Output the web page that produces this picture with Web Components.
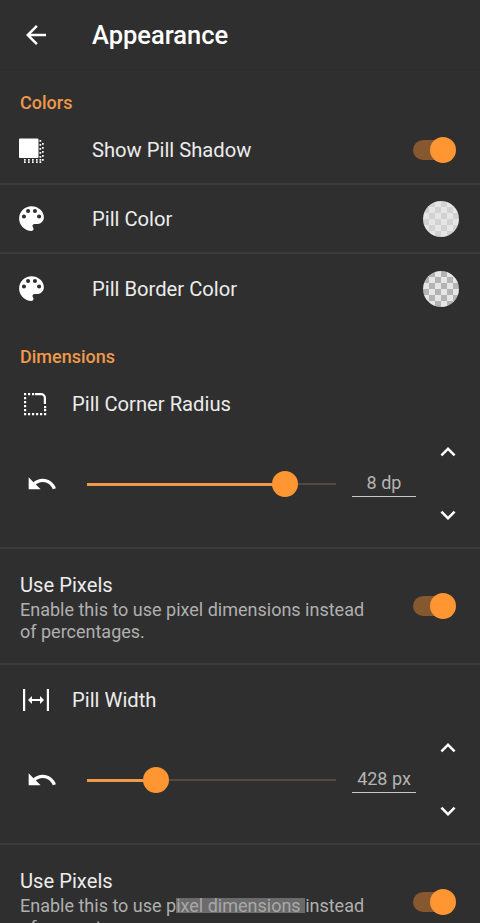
<!DOCTYPE html>
<html>
<head>
<meta charset="utf-8">
<title>Appearance</title>
<style>
  html, body { margin: 0; height: 923px; overflow: hidden; background: #2f2f2f; }
  body { font-family: Roboto, "Liberation Sans", sans-serif; color: #eee; }
</style>
</head>
<body>
<settings-page></settings-page>

<script>
const ICONS = {
  back: `<svg width="30" height="30" viewBox="0 0 24 24" fill="#fff"><path d="M20 11H7.83l5.59-5.59L12 4l-8 8 8 8 1.41-1.41L7.83 13H20z"/></svg>`,
  shadow: `<svg width="26" height="26" viewBox="0 0 26 26" fill="#fff"><rect x="1" y="1.500" width="19.500" height="19.500" rx="1"/><path d="M21.500 3h1.700v1.700h-1.700zM24 6h1.700v1.700H24zM21.500 7h1.700v1.700h-1.700zM24 10h1.700v1.700H24zM21.500 11h1.700v1.700h-1.700zM24 14h1.700v1.700H24zM21.500 15h1.700v1.700h-1.700zM24 18h1.700v1.700H24zM21.500 19h1.700v1.700h-1.700zM24 22h1.700v1.700H24zM21.500 22h1.700v1.700h-1.700zM6 22h1.700v1.700H6zM10 22h1.700v1.700h-1.700zM14 22h1.700v1.700H14zM18 22h1.700v1.700H18zM6 24.300h1.700V26H6zM10 24.300h1.700V26H10zM14 24.300h1.700V26H14zM18 24.300h1.700V26H18zM21.500 24.300h1.700V26h-1.700z"/></svg>`,
  palette: `<svg width="33" height="33" viewBox="0 0 24 24" fill="#fff"><path d="M12 3a9 9 0 0 0 0 18c.83 0 1.5-.67 1.5-1.5 0-.39-.15-.74-.39-1.01-.23-.26-.38-.61-.38-.99 0-.83.67-1.5 1.500-1.500H16c2.760 0 5-2.240 5-5 0-4.420-4.030-8-9-8zm-5.500 9a1.500 1.500 0 1 1 0-3 1.500 1.500 0 0 1 0 3zm3-4a1.500 1.500 0 1 1 0-3 1.500 1.500 0 0 1 0 3zm5 0a1.500 1.500 0 1 1 0-3 1.500 1.500 0 0 1 0 3zm3 4a1.500 1.500 0 1 1 0-3 1.500 1.500 0 0 1 0 3z"/></svg>`,
  corner: `<svg width="26" height="26" viewBox="0 0 26 26" fill="#fff"><path d="M13 2h6a5 5 0 0 1 5 5v6h-2.200V7A2.800 2.800 0 0 0 19 4.200h-6z"/><path d="M2 2h2.200v2.200H2zM6 2h2.200v2.200H6zM10 2h2.200v2.200H10zM2 6h2.200v2.200H2zM2 10h2.200v2.200H2zM2 14h2.200v2.200H2zM2 18h2.200v2.200H2zM2 22h2.200v2.200H2zM6 22h2.200v2.200H6zM10 22h2.200v2.200H10zM14 22h2.200v2.200H14zM18 22h2.200v2.200H18zM22 22h2.200v2.200H22zM22 18h2.200v2.200H22zM22 15h2.200v2.200H22z"/></svg>`,
  width: `<svg width="28" height="24" viewBox="0 0 28 24" fill="#fff"><path d="M1 1h2.200v22H1zM24.800 1H27v22h-2.200zM6 12l4-4v3h8V8l4 4-4 4v-3h-8v3z"/></svg>`,
  undo: `<svg width="32" height="32" viewBox="0 0 24 24" fill="#fff"><path d="M12.500 8c-2.650 0-5.050.99-6.900 2.600L2 7v9h9l-3.620-3.620c1.390-1.160 3.160-1.880 5.120-1.880 3.540 0 6.550 2.310 7.600 5.500l2.370-.78C21.080 11.030 17.150 8 12.500 8z"/></svg>`,
  up: `<svg width="30" height="30" viewBox="0 0 24 24" fill="#fff"><path d="M12 8l-6 6 1.410 1.410L12 10.830l4.590 4.580L18 14z"/></svg>`,
  down: `<svg width="30" height="30" viewBox="0 0 24 24" fill="#fff"><path d="M16.590 8.590L12 13.170 7.410 8.590 6 10l6 6 6-6z"/></svg>`
};

class AppBar extends HTMLElement {
  constructor() {
    super();
    this.attachShadow({ mode: "open" });
  }
  connectedCallback() {
    this.shadowRoot.innerHTML = `
      <style>
        :host { display: flex; align-items: center; height: 70px; box-sizing: border-box; padding-left: 21px; border-bottom: 1px solid #2b2b2b; }
        .icon { display: flex; width: 71px; }
        .title { font-size: 25.500px; font-weight: 500; color: #fff; }
      </style>
      <span class="icon">${ICONS.back}</span>
      <span class="title"><slot></slot></span>
    `;
  }
}
customElements.define("app-bar", AppBar);

class SectionTitle extends HTMLElement {
  constructor() {
    super();
    this.attachShadow({ mode: "open" });
  }
  connectedCallback() {
    this.shadowRoot.innerHTML = `
      <style>
        :host { display: flex; align-items: center; padding: 0 20px; height: 20px; font-size: 18px; font-weight: 500; color: #f0994a; }
      </style>
      <slot></slot>
    `;
  }
}
customElements.define("section-title", SectionTitle);

class ToggleSwitch extends HTMLElement {
  constructor() {
    super();
    this.attachShadow({ mode: "open" });
  }
  connectedCallback() {
    this.shadowRoot.innerHTML = `
      <style>
        :host { display: block; position: relative; width: 44px; height: 26px; }
        .track { position: absolute; left: 1px; top: 3px; width: 40px; height: 20px; border-radius: 10px; background: #85582f; }
        .thumb { position: absolute; right: 0; top: 0; width: 26px; height: 26px; border-radius: 50%; background: #ff9632; }
      </style>
      <div class="track"></div>
      <div class="thumb"></div>
    `;
  }
}
customElements.define("toggle-switch", ToggleSwitch);

class ColorSwatch extends HTMLElement {
  constructor() {
    super();
    this.attachShadow({ mode: "open" });
  }
  connectedCallback() {
    const dark = this.getAttribute("shade") || "#d0d0d0";
    this.shadowRoot.innerHTML = `
      <style>
        :host { display: block; width: 36px; height: 36px; border-radius: 50%; background-color: #e6e6e6;
          background-image: conic-gradient(${dark} 25%, transparent 25% 50%, ${dark} 50% 75%, transparent 75%);
          background-size: 12px 12px; background-position: 0 0; }
      </style>
    `;
  }
}
customElements.define("color-swatch", ColorSwatch);

class PrefRow extends HTMLElement {
  constructor() {
    super();
    this.attachShadow({ mode: "open" });
  }
  connectedCallback() {
    const name = this.getAttribute("icon");
    this.shadowRoot.innerHTML = `
      <style>
        :host { display: flex; align-items: center; box-sizing: border-box; height: 69px; padding: 0 20px 0 18px; font-size: 20.200px; color: #ececec; }
        :host([divider]) { border-bottom: 2px solid #3c3c3c; }
        .icon { display: flex; width: 74px; flex: none; }
        .icon.palette { margin-left: -3px; width: 77px; }
        .label { flex: 1; }
      </style>
      <span class="icon ${name}">${ICONS[name]}</span>
      <span class="label"><slot></slot></span>
      <slot name="end"></slot>
    `;
  }
}
customElements.define("pref-row", PrefRow);

class SliderPref extends HTMLElement {
  constructor() {
    super();
    this.attachShadow({ mode: "open" });
  }
  connectedCallback() {
    const icon = ICONS[this.getAttribute("icon")];
    const value = this.getAttribute("value");
    const pos = this.getAttribute("pos");
    this.shadowRoot.innerHTML = `
      <style>
        :host { display: block; border-bottom: 2px solid #3c3c3c; height: 180px; box-sizing: border-box; }
        .head { display: flex; align-items: center; height: 34px; padding-top: 18px; padding-left: 22px; font-size: 20.200px; color: #ececec; }
        .head .icon { display: flex; width: 50px; flex: none; }
        .body { display: flex; align-items: center; height: 96px; margin-top: 15px; padding-left: 26px; }
        .undo { display: flex; width: 61px; flex: none; }
        .track { position: relative; width: 249px; height: 2px; background: #55493e; flex: none; }
        .fill { height: 3px; width: ${pos}px; background: #f0994a; }
        .knob { position: absolute; left: ${pos}px; top: -12px; margin-left: -13px; width: 26px; height: 26px; border-radius: 50%; background: #ff9632; }
        .value { width: 64px; margin-left: 16px; flex: none; height: 26px; line-height: 24px; box-sizing: border-box; border-bottom: 1px solid #c8c8c8; text-align: center; font-size: 18px; color: #b4b4b4; }
        .spin { display: flex; flex-direction: column; justify-content: space-between; height: 93px; margin-left: 17px; margin-top: -2px; }
        .spin span { display: flex; }
      </style>
      <div class="head"><span class="icon">${icon}</span><slot></slot></div>
      <div class="body">
        <span class="undo">${ICONS.undo}</span>
        <div class="track"><div class="fill"></div><div class="knob"></div></div>
        <div class="value">${value}</div>
        <div class="spin"><span>${ICONS.up}</span><span>${ICONS.down}</span></div>
      </div>
    `;
  }
}
customElements.define("slider-pref", SliderPref);

class SwitchPref extends HTMLElement {
  constructor() {
    super();
    this.attachShadow({ mode: "open" });
  }
  connectedCallback() {
    this.shadowRoot.innerHTML = `
      <style>
        :host { display: flex; align-items: center; box-sizing: border-box; height: 116px; padding: 0 24px 0 20px; border-bottom: 2px solid #3c3c3c; }
        .text { flex: 1; padding-top: 3px; }
        .title { font-size: 20.200px; color: #ececec; line-height: 24px; }
        .summary { font-size: 18px; color: #b0b0b0; line-height: 22px; margin-top: 2px; width: 360px; }
      </style>
      <div class="text">
        <div class="title">${this.getAttribute("label")}</div>
        <div class="summary"><slot></slot></div>
      </div>
      <toggle-switch></toggle-switch>
    `;
  }
}
customElements.define("switch-pref", SwitchPref);

class SettingsPage extends HTMLElement {
  constructor() {
    super();
    this.attachShadow({ mode: "open" });
  }
  connectedCallback() {
    this.shadowRoot.innerHTML = `
      <style>
        :host { display: block; height: 923px; overflow: hidden; }
        .first { margin-top: 22px; margin-bottom: 4px; }
        .second { margin-top: 23px; margin-bottom: 3px; }
        mark { color: #a8a8a8; background: linear-gradient(transparent 15%, #6b6b6b 15%, #6b6b6b 85%, transparent 85%); }
        color-swatch { margin-right: 1px; }
        toggle-switch { margin-right: 4px; }
      </style>
      <app-bar>Appearance</app-bar>
      <section-title class="first">Colors</section-title>
      <pref-row icon="shadow" divider>Show Pill Shadow<toggle-switch slot="end"></toggle-switch></pref-row>
      <pref-row icon="palette" divider>Pill Color<color-swatch slot="end" shade="#d2d2d2"></color-swatch></pref-row>
      <pref-row icon="palette">Pill Border Color<color-swatch slot="end" shade="#b4b4b4"></color-swatch></pref-row>
      <section-title class="second">Dimensions</section-title>
      <slider-pref icon="corner" value="8 dp" pos="198">Pill Corner Radius</slider-pref>
      <switch-pref label="Use Pixels">Enable this to use pixel dimensions instead of percentages.</switch-pref>
      <slider-pref icon="width" value="428 px" pos="69">Pill Width</slider-pref>
      <switch-pref label="Use Pixels">Enable this to use p<mark>ixel dimensions </mark>instead of percentages.</switch-pref>
    `;
  }
}
customElements.define("settings-page", SettingsPage);
</script>
</body>
</html>
